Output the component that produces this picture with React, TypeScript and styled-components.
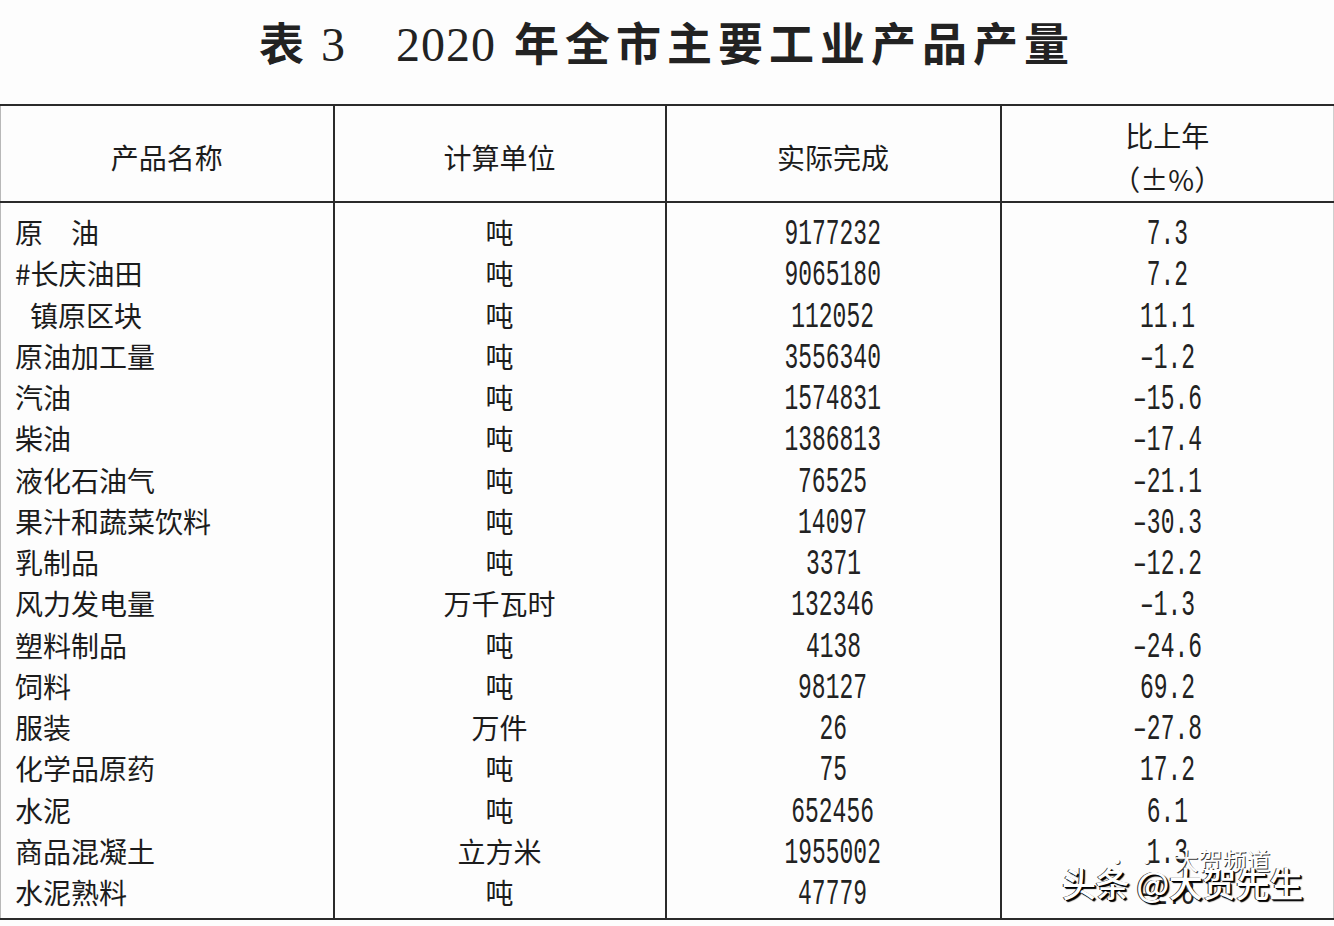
import React from "react";
import styled, { createGlobalStyle } from "styled-components";

const Global = createGlobalStyle`
  html, body { margin: 0; padding: 0; background: #fdfdfd; }
  body { width: 1334px; height: 926px; overflow: hidden; }
`;

const Page = styled.div`
  position: relative;
  width: 1334px;
  height: 926px;
  background: #fdfdfd;
  color: #1c1c1c;
  font-family: "Noto Sans CJK SC", "Liberation Sans", sans-serif;
  display: flex;
  flex-direction: column;
`;

const TitleBar = styled.div`
  flex: 0 0 104px;
  display: flex;
  align-items: center;
  justify-content: center;
  padding-bottom: 22px;
  box-sizing: border-box;
`;

const Title = styled.h1`
  margin: 0;
  display: flex;
  align-items: baseline;
  font-family: "Liberation Serif", "Noto Sans CJK SC", serif;
  font-size: 45px;
  font-weight: 600;
  color: #222;
  white-space: pre;
`;

const TitleWords = styled.span<{ $gap?: number }>`
  letter-spacing: 6px;
  margin-left: ${(p) => p.$gap ?? 0}px;
`;

const TitleDigits = styled.span<{ $gap?: number }>`
  font-weight: 400;
  font-size: 48px;
  letter-spacing: 1px;
  margin-left: ${(p) => p.$gap ?? 0}px;
`;

const Table = styled.table`
  flex: 0 0 auto;
  width: 1334px;
  border-collapse: collapse;
  table-layout: fixed;
  border-left: 1px solid #b8b8b8;
  border-right: 1px solid #cfcfcf;
`;

const HeadCell = styled.th`
  height: 95px;
  padding: 0;
  font-weight: 400;
  font-size: 28px;
  line-height: 44px;
  vertical-align: middle;
  border-top: 2px solid #2a2a2a;
  border-bottom: 2px solid #2a2a2a;
  border-right: 2px solid #2a2a2a;
  &:last-child { border-right: none; }
`;

const HeadLabel = styled.div`
  margin-top: 6px;
`;

const Cell = styled.td<{ $align: "left" | "center"; $indent?: boolean }>`
  padding: 0;
  padding-left: ${(p) => (p.$align === "left" ? (p.$indent ? "29px" : "14px") : "0")};
  text-align: ${(p) => p.$align};
  font-size: 28px;
  line-height: 41px;
  white-space: pre;
  border-right: 2px solid #2a2a2a;
  &:last-child { border-right: none; }
`;

const Row = styled.tr<{ $edge?: "first" | "last" }>`
  & > td {
    height: ${(p) => (p.$edge === "first" ? "50.25px" : p.$edge === "last" ? "46px" : "41.25px")};
    vertical-align: ${(p) => (p.$edge === "first" ? "bottom" : p.$edge === "last" ? "top" : "middle")};
  }
  &:last-child > td { border-bottom: 2px solid #2a2a2a; }
`;

const Num = styled.span`
  display: inline-block;
  vertical-align: top;
  line-height: 41px;
  font-family: "Liberation Mono", monospace;
  font-size: 37px;
  transform: translateY(2px) scaleX(0.62);
  color: #222;
`;

const Watermark = styled.div`
  position: absolute;
  left: 1062px;
  top: 858px;
  font-size: 34px;
  font-weight: 500;
  color: #fff;
  letter-spacing: -0.5px;
  text-shadow: 1px 1px 0 #000, -1px 0 0 #333, 2px 2px 1px #000;
  white-space: pre;
`;

const WatermarkSmall = styled.div`
  position: absolute;
  left: 1105px;
  top: 842px;
  font-size: 24px;
  color: #fff;
  text-shadow: 1px 1px 0 #222;
  opacity: 0.9;
  white-space: pre;
`;

type R = { name: string; unit: string; value: string; change: string; indent?: boolean };

const rows: R[] = [
  { name: "原\u3000油", unit: "吨", value: "9177232", change: "7.3" },
  { name: "#长庆油田", unit: "吨", value: "9065180", change: "7.2" },
  { name: "镇原区块", unit: "吨", value: "112052", change: "11.1", indent: true },
  { name: "原油加工量", unit: "吨", value: "3556340", change: "–1.2" },
  { name: "汽油", unit: "吨", value: "1574831", change: "–15.6" },
  { name: "柴油", unit: "吨", value: "1386813", change: "–17.4" },
  { name: "液化石油气", unit: "吨", value: "76525", change: "–21.1" },
  { name: "果汁和蔬菜饮料", unit: "吨", value: "14097", change: "–30.3" },
  { name: "乳制品", unit: "吨", value: "3371", change: "–12.2" },
  { name: "风力发电量", unit: "万千瓦时", value: "132346", change: "–1.3" },
  { name: "塑料制品", unit: "吨", value: "4138", change: "–24.6" },
  { name: "饲料", unit: "吨", value: "98127", change: "69.2" },
  { name: "服装", unit: "万件", value: "26", change: "–27.8" },
  { name: "化学品原药", unit: "吨", value: "75", change: "17.2" },
  { name: "水泥", unit: "吨", value: "652456", change: "6.1" },
  { name: "商品混凝土", unit: "立方米", value: "1955002", change: "1.3" },
  { name: "水泥熟料", unit: "吨", value: "47779", change: "–2.8" },
];

export default function App() {
  return (
    <Page>
      <Global />
      <TitleBar>
        <Title>
          <TitleWords>表</TitleWords>
          <TitleDigits $gap={11}>3</TitleDigits>
          <TitleDigits $gap={50}>2020</TitleDigits>
          <TitleWords $gap={18}>年全市主要工业产品产量</TitleWords>
        </Title>
      </TitleBar>
      <Table>
        <colgroup>
          <col style={{ width: 333 }} />
          <col style={{ width: 332 }} />
          <col style={{ width: 335 }} />
          <col />
        </colgroup>
        <thead>
          <tr>
            <HeadCell><HeadLabel>产品名称</HeadLabel></HeadCell>
            <HeadCell><HeadLabel>计算单位</HeadLabel></HeadCell>
            <HeadCell><HeadLabel>实际完成</HeadLabel></HeadCell>
            <HeadCell>
              <HeadLabel>
                比上年
                <br />
                （±%）
              </HeadLabel>
            </HeadCell>
          </tr>
        </thead>
        <tbody>
          {rows.map((r, i) => (
            <Row key={i} $edge={i === 0 ? "first" : i === rows.length - 1 ? "last" : undefined}>
              <Cell $align="left" $indent={r.indent}>{r.name}</Cell>
              <Cell $align="center">{r.unit}</Cell>
              <Cell $align="center"><Num>{r.value}</Num></Cell>
              <Cell $align="center"><Num>{r.change}</Num></Cell>
            </Row>
          ))}
        </tbody>
      </Table>
      <WatermarkSmall>{"· ·   大贺频道"}</WatermarkSmall>
      <Watermark>{"头条 @大贺先生"}</Watermark>
    </Page>
  );
}
